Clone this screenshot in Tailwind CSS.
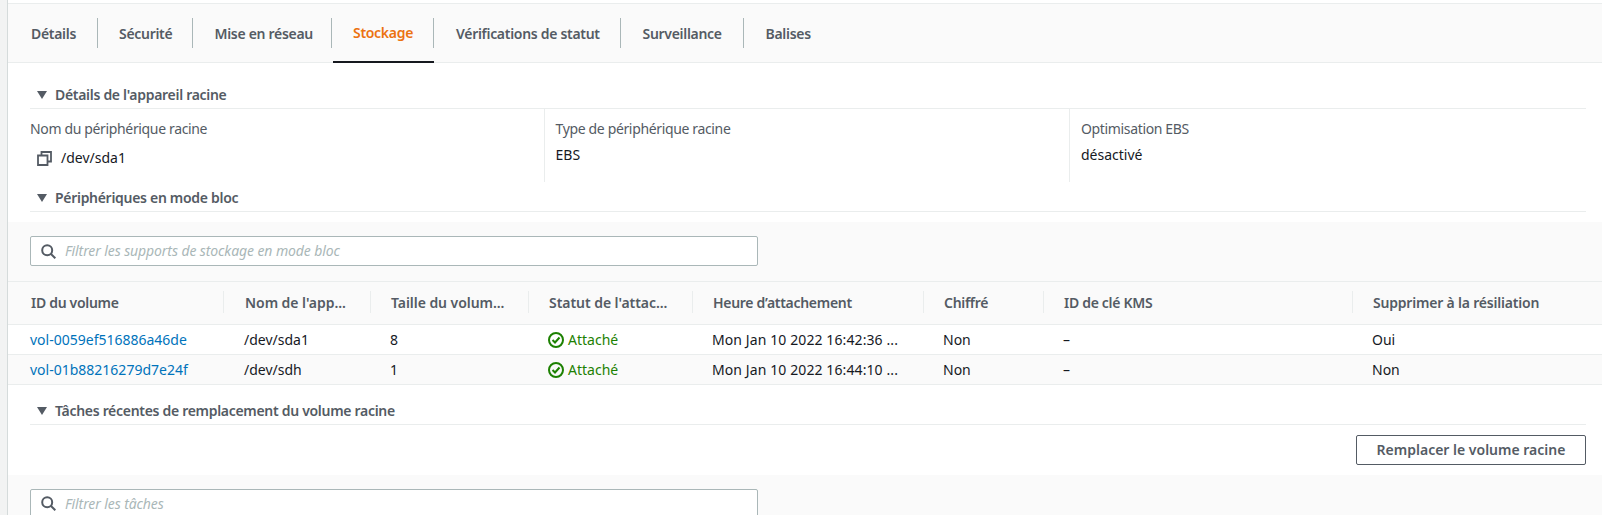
<!DOCTYPE html>
<html lang="fr">
<head>
  <meta charset="UTF-8" />
  <title>Stockage</title>
  <script src="https://cdn.jsdelivr.net/npm/@tailwindcss/browser@4"></script>
</head>
<body class="bg-white text-[#16191f] h-[515px] overflow-hidden flex font-['Noto_Sans',sans-serif] text-[14px] leading-[20px]">
  <!-- Left strip -->
  <div class="w-[8px] shrink-0 bg-[#f2f3f3] border-r border-[#d5dbdb]"></div>

  <main class="flex-1 min-w-0">
    <!-- Tabs -->
    <div class="mt-[3px] h-[60px] border-y border-[#eaeded] bg-[#fafafa] flex items-stretch font-semibold tracking-[-0.3px] text-[#545b64]">
      <a class="w-[90px] pl-[23px] pt-[1px] flex items-center relative">Détails<span class="absolute right-0 top-[14px] h-[30px] w-px bg-[#aab7b8]"></span></a>
      <a class="w-[95px] pl-[21px] pt-[1px] flex items-center relative">Sécurité<span class="absolute right-0 top-[14px] h-[30px] w-px bg-[#aab7b8]"></span></a>
      <a class="w-[139px] pl-[21.5px] pt-[1px] flex items-center relative">Mise en réseau<span class="absolute right-0 top-[14px] h-[30px] w-px bg-[#aab7b8]"></span></a>
      <a class="w-[101px] ml-px pl-[20px] pt-[1px] flex items-center relative text-[#ec7211] border-b-2 border-[#16191f] mb-[-1px]">Stockage<span class="absolute right-0 top-[14px] h-[30px] w-px bg-[#aab7b8]"></span></a>
      <a class="w-[187px] pl-[22px] pt-[1px] flex items-center relative">Vérifications de statut<span class="absolute right-0 top-[14px] h-[30px] w-px bg-[#aab7b8]"></span></a>
      <a class="w-[123px] pl-[21.5px] pt-[1px] flex items-center relative">Surveillance<span class="absolute right-0 top-[14px] h-[30px] w-px bg-[#aab7b8]"></span></a>
      <a class="pl-[21.5px] pt-[1px] flex items-center">Balises</a>
    </div>

    <!-- Root device details -->
    <div class="ml-[22px] mr-[16px] h-[46px] border-b border-[#eaeded] flex items-end pb-[3px] pl-[7px] gap-[8px] font-semibold tracking-[-0.3px] text-[#545b64]">
      <svg class="w-[10px] h-[8px] mb-[6px]" viewBox="0 0 10 8"><path d="M0 0h10L5 8z" fill="#545b64"/></svg>
      <h2>Détails de l'appareil racine</h2>
    </div>
    <div class="ml-[22px] mr-[16px] h-[73px] flex">
      <div class="w-[514.5px] border-r border-[#eaeded]">
        <div class="pt-[10px] text-[#545b64] tracking-[-0.35px]">Nom du périphérique racine</div>
        <div class="flex items-center mt-[9px] pl-[7px] gap-[9px]">
          <svg class="w-[15px] h-[15px]" viewBox="0 0 15 15" fill="none" stroke="#545b64" stroke-width="1.8"><path d="M1 4.5h9.5V14H1z"/><path d="M4.5 4.5V1H14v9.5h-3.5"/></svg>
          <span>/dev/sda1</span>
        </div>
      </div>
      <div class="w-[525.5px] border-r border-[#eaeded] pl-[11px]">
        <div class="pt-[10px] text-[#545b64] tracking-[-0.35px]">Type de périphérique racine</div>
        <div class="mt-[6px]">EBS</div>
      </div>
      <div class="flex-1 pl-[11px]">
        <div class="pt-[10px] text-[#545b64] tracking-[-0.35px]">Optimisation EBS</div>
        <div class="mt-[6px]">désactivé</div>
      </div>
    </div>

    <!-- Block devices -->
    <div class="ml-[22px] mr-[16px] h-[30px] border-b border-[#eaeded] flex items-end pb-[3px] pl-[7px] gap-[8px] font-semibold tracking-[-0.3px] text-[#545b64]">
      <svg class="w-[10px] h-[8px] mb-[6px]" viewBox="0 0 10 8"><path d="M0 0h10L5 8z" fill="#545b64"/></svg>
      <h2>Périphériques en mode bloc</h2>
    </div>
    <div class="mt-[10px] h-[60px] bg-[#fafafa] border-b border-[#eaeded] pt-[14px] pl-[22px]">
      <div class="w-[728px] h-[30px] bg-white border border-[#aab7b8] rounded-[2px] flex items-center pl-[10px] gap-[9px]">
        <svg class="w-[15px] h-[15px]" viewBox="0 0 15 15" fill="none" stroke="#545b64" stroke-width="2"><circle cx="6.2" cy="6.2" r="5"/><path d="M10 10l4.3 4.3"/></svg>
        <span class="italic text-[#aab7b8] tracking-[-0.1px]">Filtrer les supports de stockage en mode bloc</span>
      </div>
    </div>

    <!-- Volumes table -->
    <table class="w-full table-fixed border-collapse">
      <colgroup>
        <col class="w-[216px]" /><col class="w-[147px]" /><col class="w-[158px]" /><col class="w-[164px]" />
        <col class="w-[231px]" /><col class="w-[120px]" /><col class="w-[309px]" /><col />
      </colgroup>
      <thead class="bg-[#fafafa] text-[#545b64] text-left tracking-[-0.3px]">
        <tr class="h-[42px] border-b border-[#eaeded]">
          <th class="font-semibold pl-[23px] relative">ID du volume<span class="absolute right-0 top-[9px] h-[22px] w-px bg-[#eaeded]"></span></th>
          <th class="font-semibold pl-[21px] relative tracking-[-0.05px]">Nom de l'app...<span class="absolute right-0 top-[9px] h-[22px] w-px bg-[#eaeded]"></span></th>
          <th class="font-semibold pl-[20px] relative tracking-[-0.05px]">Taille du volum...<span class="absolute right-0 top-[9px] h-[22px] w-px bg-[#eaeded]"></span></th>
          <th class="font-semibold pl-[20px] relative tracking-[-0.05px]">Statut de l'attac...<span class="absolute right-0 top-[9px] h-[22px] w-px bg-[#eaeded]"></span></th>
          <th class="font-semibold pl-[20px] relative">Heure d’attachement<span class="absolute right-0 top-[9px] h-[22px] w-px bg-[#eaeded]"></span></th>
          <th class="font-semibold pl-[20px] relative">Chiffré<span class="absolute right-0 top-[9px] h-[22px] w-px bg-[#eaeded]"></span></th>
          <th class="font-semibold pl-[20px] relative">ID de clé KMS<span class="absolute right-0 top-[9px] h-[22px] w-px bg-[#eaeded]"></span></th>
          <th class="font-semibold pl-[20px] tracking-[-0.2px]">Supprimer à la résiliation</th>
        </tr>
      </thead>
      <tbody>
        <tr class="h-[30px] border-b border-[#eaeded]">
          <td class="pl-[22px] pt-[2px] text-[#0073bb]">vol-0059ef516886a46de</td>
          <td class="pl-[20px] pt-[2px]">/dev/sda1</td>
          <td class="pl-[19px] pt-[2px]">8</td>
          <td class="pl-[19px] pt-[2px]">
            <span class="flex items-center gap-[4px] text-[#1d8102]">
              <svg class="w-[16px] h-[16px]" viewBox="0 0 16 16" fill="none" stroke="#1d8102" stroke-width="2"><circle cx="8" cy="8" r="7"/><path d="M4.5 8l2.5 2.5 4.5-5"/></svg>
              Attaché
            </span>
          </td>
          <td class="pl-[19px] pt-[2px] tracking-[0.1px]">Mon Jan 10 2022 16:42:36 ...</td>
          <td class="pl-[19px] pt-[2px]">Non</td>
          <td class="pl-[19px] pt-[2px]">–</td>
          <td class="pl-[19px] pt-[2px]">Oui</td>
        </tr>
        <tr class="h-[30px] border-b border-[#eaeded] bg-[#fafafa]">
          <td class="pl-[22px] pt-[2px] text-[#0073bb]">vol-01b88216279d7e24f</td>
          <td class="pl-[20px] pt-[2px]">/dev/sdh</td>
          <td class="pl-[19px] pt-[2px]">1</td>
          <td class="pl-[19px] pt-[2px]">
            <span class="flex items-center gap-[4px] text-[#1d8102]">
              <svg class="w-[16px] h-[16px]" viewBox="0 0 16 16" fill="none" stroke="#1d8102" stroke-width="2"><circle cx="8" cy="8" r="7"/><path d="M4.5 8l2.5 2.5 4.5-5"/></svg>
              Attaché
            </span>
          </td>
          <td class="pl-[19px] pt-[2px] tracking-[0.1px]">Mon Jan 10 2022 16:44:10 ...</td>
          <td class="pl-[19px] pt-[2px]">Non</td>
          <td class="pl-[19px] pt-[2px]">–</td>
          <td class="pl-[19px] pt-[2px]">Non</td>
        </tr>
      </tbody>
    </table>

    <!-- Root volume replacement tasks -->
    <div class="ml-[22px] mr-[16px] h-[40px] border-b border-[#eaeded] flex items-end pb-[3px] pl-[7px] gap-[8px] font-semibold tracking-[-0.3px] text-[#545b64]">
      <svg class="w-[10px] h-[8px] mb-[6px]" viewBox="0 0 10 8"><path d="M0 0h10L5 8z" fill="#545b64"/></svg>
      <h2>Tâches récentes de remplacement du volume racine</h2>
    </div>
    <div class="mr-[16px] mt-[10px] mb-[10px] flex justify-end">
      <button class="w-[230px] h-[30px] border border-[#545b64] rounded-[2px] font-semibold text-[#545b64] bg-white">Remplacer le volume racine</button>
    </div>
    <div class="h-[60px] bg-[#fafafa] pt-[14px] pl-[22px]">
      <div class="w-[728px] h-[30px] bg-white border border-[#aab7b8] rounded-[2px] flex items-center pl-[10px] gap-[9px]">
        <svg class="w-[15px] h-[15px]" viewBox="0 0 15 15" fill="none" stroke="#545b64" stroke-width="2"><circle cx="6.2" cy="6.2" r="5"/><path d="M10 10l4.3 4.3"/></svg>
        <span class="italic text-[#aab7b8] tracking-[-0.1px]">Filtrer les tâches</span>
      </div>
    </div>
  </main>
</body>
</html>
